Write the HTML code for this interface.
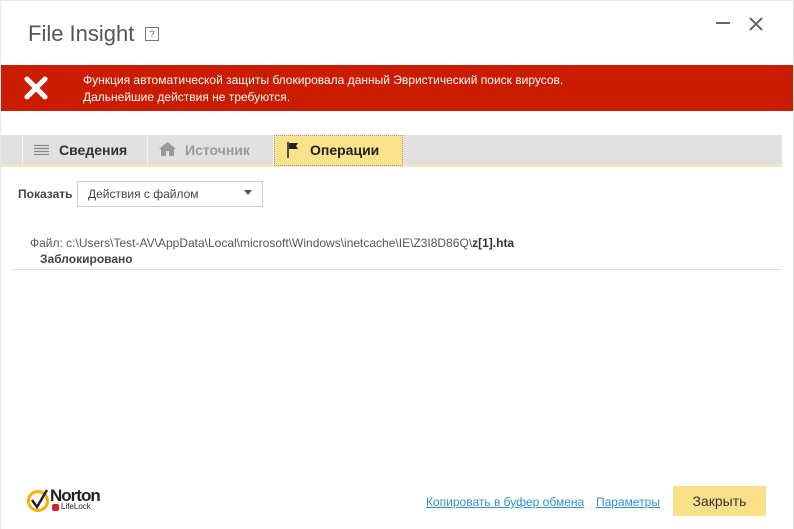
<!DOCTYPE html><html><head><meta charset="utf-8"><style>
body{margin:0;width:794px;height:529px;background:#fff;font-family:"Segoe UI","Liberation Sans","Noto Sans CJK SC",sans-serif;position:relative;overflow:hidden;color:#333}
.a{position:absolute}
</style></head><body>
<div class="a" style="left:0;top:0;width:794px;height:1px;background:#e3e8ee"></div>
<div class="a" style="left:0;top:0;width:1px;height:529px;background:#e3ebf2"></div>
<div class="a" style="left:793px;top:0;width:1px;height:529px;background:#ddd"></div>
<div class="a" style="left:28px;top:21px;font-size:22px;color:#555">File Insight</div>
<div class="a" style="left:145px;top:27px;width:12px;height:12px;border:1px solid #777;font-size:9px;line-height:12px;text-align:center;color:#555">?</div>
<div class="a" style="left:716px;top:22px;width:14px;height:2px;background:#666"></div>
<svg class="a" style="left:749px;top:17px" width="14" height="14"><path d="M1 1L13 13M13 1L1 13" stroke="#666" stroke-width="2"/></svg>
<div class="a" style="left:1px;top:65px;width:792px;height:46px;background:#c91c00"></div>
<svg class="a" style="left:24px;top:76px" width="24" height="24"><path d="M3 3L21 21M21 3L3 21" stroke="#fff" stroke-width="5" stroke-linecap="round"/></svg>
<div class="a" style="left:83px;top:72px;font-size:12px;line-height:17px;color:#fff">Функция автоматической защиты блокировала данный Эвристический поиск вирусов.<br>Дальнейшие действия не требуются.</div>
<div class="a" style="left:1px;top:135px;width:781px;height:30px;background:#e1e1e1"></div>
<div class="a" style="left:1px;top:165px;width:781px;height:2px;background:#f6e7b5"></div>
<div class="a" style="left:22px;top:135px;width:1px;height:30px;background:#f4f4f4"></div>
<div class="a" style="left:147px;top:135px;width:1px;height:30px;background:#f4f4f4"></div>
<div class="a" style="left:273px;top:135px;width:1px;height:30px;background:#f4f4f4"></div>
<div class="a" style="left:274px;top:135px;width:127px;height:29px;background:#fbe28c;border:1px dotted #999"></div>
<svg class="a" style="left:34px;top:144px" width="15" height="12"><path d="M0 1.5H15M0 4.5H15M0 7.5H15M0 10.5H15" stroke="#888" stroke-width="1.2"/></svg>
<div class="a" style="left:59px;top:142px;font-size:14px;font-weight:bold;color:#333">Сведения</div>
<svg class="a" style="left:159px;top:142px" width="17" height="14"><path d="M8.5 0L17 7H15V14H10V9H7V14H2V7H0Z" fill="#999"/></svg>
<div class="a" style="left:185px;top:142px;font-size:14px;font-weight:bold;color:#999">Источник</div>
<svg class="a" style="left:287px;top:142px" width="12" height="16"><path d="M1 0V16" stroke="#222" stroke-width="1.5"/><path d="M2 1H11L9 4L11 7H2Z" fill="#222"/></svg>
<div class="a" style="left:310px;top:142px;font-size:14px;font-weight:bold;color:#222">Операции</div>
<div class="a" style="left:18px;top:187px;font-size:12px;font-weight:bold;color:#444">Показать</div>
<div class="a" style="left:77px;top:181px;width:184px;height:24px;border:1px solid #ccc"></div>
<div class="a" style="left:88px;top:187px;font-size:12px;color:#444">Действия с файлом</div>
<div class="a" style="left:244px;top:190px;width:0;height:0;border-left:4px solid transparent;border-right:4px solid transparent;border-top:5px solid #555"></div>
<div class="a" style="left:30px;top:236px;font-size:12px;color:#555;white-space:nowrap">Файл: c:\Users\Test-AV\AppData\Local\microsoft\Windows\inetcache\IE\Z3I8D86Q\<b style="color:#333">z[1].hta</b></div>
<div class="a" style="left:40px;top:252px;font-size:12px;font-weight:bold;color:#444">Заблокировано</div>
<div class="a" style="left:12px;top:269px;width:770px;height:1px;background:#e0e0e0"></div>
<svg class="a" style="left:27px;top:488px" width="24" height="26"><circle cx="11" cy="13" r="9.5" fill="none" stroke="#f4b400" stroke-width="3"/><path d="M5 12L10 19L20 2" fill="none" stroke="#222" stroke-width="2.5"/></svg>
<div class="a" style="left:50px;top:486px;font-size:17px;font-weight:bold;color:#222;letter-spacing:-1px">Norton</div>
<div class="a" style="left:52px;top:504px;width:7px;height:7px;border-radius:2px;background:#d8232a"></div>
<div class="a" style="left:61px;top:502px;font-size:8px;color:#222">LifeLock</div>
<div class="a" style="left:426px;top:495px;font-size:12px;color:#2f8fd0;text-decoration:underline">Копировать в буфер обмена</div>
<div class="a" style="left:596px;top:495px;font-size:12px;color:#2f8fd0;text-decoration:underline">Параметры</div>
<div class="a" style="left:673px;top:486px;width:93px;height:30px;background:#fbe08a;font-size:14px;line-height:30px;text-align:center;color:#333">Закрыть</div>
</body></html>
